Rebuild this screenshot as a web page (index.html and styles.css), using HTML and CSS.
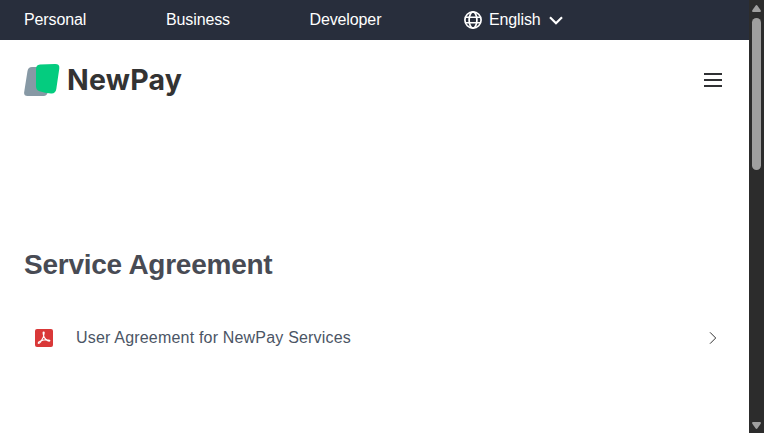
FILE: index.html
```html
<!DOCTYPE html>
<html lang="en">
<head>
<meta charset="utf-8">
<title>Service Agreement</title>
<link rel="stylesheet" href="styles.css">
</head>
<body>
<div class="page">
  <nav class="topbar">
    <a class="personal">Personal</a>
    <a class="business">Business</a>
    <a class="developer">Developer</a>
    <div class="language">
      <svg width="18" height="18" viewBox="0 0 18 18" fill="none" stroke="#fff" stroke-width="1.7"><circle cx="9" cy="9" r="8.1"/><ellipse cx="9" cy="9" rx="3.9" ry="8.1"/><path d="M1.5 6.2h15M1.5 11.8h15" stroke-width="1.5"/></svg>
      <span>English</span>
      <svg class="caret" width="14" height="9" viewBox="0 0 14 9" fill="none" stroke="#fff" stroke-width="2.200"><path d="M1 1.200l6 6 6-6"/></svg>
    </div>
  </nav>
  <header class="header">
    <div class="logo">
      <svg width="36" height="33" viewBox="0 0 36 33"><path d="M8 3h12Q23.300 3 23 6L24 27.500Q23 32 19.500 32H3.500Q-.5 32 .2 28L3.500 7Q4.200 3 8 3z" fill="#8799a5"/><path d="M16 .5L31 .1Q35.900 0 35.300 4.500L32.300 25Q31.500 29.800 27 29.400Q21 29 15.500 27.300Q12 26 12 22.500V5Q12 .8 16 .5z" fill="#04cc7f"/></svg>
      <span class="wordmark">NewPay</span>
    </div>
    <svg width="18" height="14" viewBox="0 0 18 14"><path d="M0 0h18v2H0zM0 6h18v2H0zM0 12h18v2H0z" fill="#303133"/></svg>
  </header>
  <main class="content">
    <h1>Service Agreement</h1>
    <a class="document">
      <svg width="18" height="18" viewBox="0 0 18 18"><rect width="18" height="18" rx="2" fill="#d93838"/><path d="M8.100 3.800c0-.9 1.100-.9 1.100 0C9.200 6.500 7.600 10.300 5.700 12.800 4.800 14.200 3.300 14.800 3.200 13.900c0-1.300 4.500-3.200 9-3.100 2.200 0 2.800.6 2.600 1-.3.700-2.400.2-3.600-1C9.300 9.200 8.300 6.400 8.100 3.800z" fill="none" stroke="#fff" stroke-width="1.150"/></svg>
      <span>User Agreement for NewPay Services</span>
      <svg class="next" width="8" height="14" viewBox="0 0 8 14" fill="none" stroke="#333" stroke-width="1"><path d="M1 1.300l5.700 5.700L1 12.700"/></svg>
    </a>
  </main>
</div>
<aside class="scrollbar">
  <svg width="9" height="7" viewBox="0 0 9 7"><path d="M3.500.7q1-1.300 2 0L8.700 5.300Q9.300 7 8 7H1Q-.3 7 .3 5.300z" fill="#9f9f9f"/></svg>
  <div class="thumb"></div>
  <svg class="down" width="9" height="7" viewBox="0 0 9 7"><path d="M3.500 6.300q1 1.300 2 0L8.700 1.700Q9.300 0 8 0H1Q-.3 0 .3 1.700z" fill="#9f9f9f"/></svg>
</aside>
</body>
</html>
```
FILE: styles.css
```css
* { box-sizing: border-box; }
body {
  display: flex;
  height: 433px;
  margin: 0;
  overflow: hidden;
  background: #fff;
  font: 16px/20px "Liberation Sans", Arial, sans-serif;
}
svg { display: block; flex: none; }
.page { width: 749px; }
.topbar {
  display: flex;
  align-items: center;
  height: 40px;
  padding-left: 24px;
  background: #282e3c;
  color: #fff;
  letter-spacing: -.12px;
}
.personal { width: 142px; }
.business { width: 143.500px; }
.developer { width: 154.500px; }
.language { display: flex; align-items: center; }
.language span { margin-left: 7px; }
.caret { margin-left: 8.500px; }
.header {
  display: flex;
  align-items: center;
  justify-content: space-between;
  height: 80px;
  padding: 0 27px 0 24px;
}
.logo { display: flex; align-items: center; }
.wordmark {
  margin-left: 7px;
  color: #333;
  font: 700 28.500px/34px Inter, sans-serif;
  letter-spacing: .2px;
}
.content { padding: 125px 24px 0; }
h1 {
  margin: 0;
  color: #484b54;
  font-size: 28px;
  line-height: 40px;
  letter-spacing: -.25px;
}
.document {
  display: flex;
  align-items: center;
  height: 60px;
  margin-top: 23px;
  padding: 0 8px 0 11px;
  color: #4b5565;
}
.document span { margin-left: 23px; letter-spacing: .19px; }
.next { margin-left: auto; }
.scrollbar {
  display: flex;
  flex-direction: column;
  align-items: center;
  width: 15px;
  padding: 5px 0 4px;
  background: #2c2c2c;
}
.thumb {
  width: 9px;
  height: 152px;
  margin-top: 6px;
  border-radius: 5px;
  background: #9f9f9f;
}
.down { margin-top: auto; }
```
